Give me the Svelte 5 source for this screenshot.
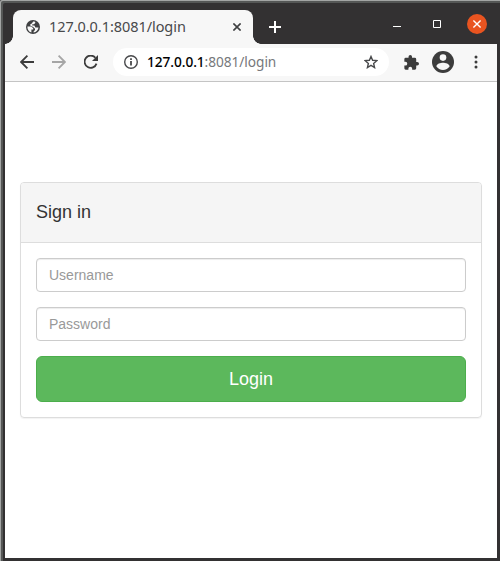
<script>
  let username = $state('');
  let password = $state('');
</script>

<div class="window">
  <header class="titlebar">
    <div class="tab">
      <svg class="globe" width="14" height="14" viewBox="0 0 14 14">
        <circle cx="7" cy="7" r="7" fill="#3f4042" />
        <path d="M1.4 6.4 5.2 6.5 7.2 8.3V9.6H5.4V12.4C2.7 11.7 1.2 9.4 1.4 6.4ZM7.2 1.5C8 1.5 8.6 1.6 9.2 1.9V3.1L8 4.2H6.3V5.4H8.4L9.4 7.6H12.5C12.2 10.2 10.3 12.3 7.6 12.5V11.4L9 10V8.8L7.2 7 4.2 5.6V4.4L5.8 3.4Z" fill="#f7f7f7" />
      </svg>
      <span class="title">127.0.0.1:8081/login</span>
      <svg class="close" width="8" height="8" viewBox="0 0 8 8"><path d="m.4.4 7.2 7.2m0-7.2L.4 7.6" stroke="#3f4042" stroke-width="1.6" /></svg>
    </div>
    <svg class="plus" width="12" height="12" viewBox="0 0 12 12"><path d="M6 0v12M0 6h12" stroke="#fff" stroke-width="2" /></svg>
    <div class="controls">
      <svg width="8" height="8" viewBox="0 0 8 8"><path d="M0 6.5h8" stroke="#fff" /></svg>
      <svg width="8" height="8" viewBox="0 0 8 8"><path d="M.5.5h7v7h-7z" fill="none" stroke="#fff" /></svg>
      <svg width="20" height="20" viewBox="0 0 20 20"><circle cx="10" cy="10" r="10" fill="#e95420" /><path d="m6.4 6.4 7.2 7.2m0-7.2-7.2 7.2" stroke="#fff" stroke-width="1.4" /></svg>
    </div>
  </header>

  <nav class="toolbar">
    <svg class="back" width="14" height="14" viewBox="0 0 14 14"><path d="M14 7H1.5M7.4.7 1.1 7l6.3 6.3" fill="none" stroke="#3c3c3c" stroke-width="1.8" /></svg>
    <svg class="forward" width="14" height="14" viewBox="0 0 14 14"><path d="M0 7h12.5M6.6.7 12.9 7l-6.3 6.3" fill="none" stroke="#a6a6a6" stroke-width="1.8" /></svg>
    <svg class="reload" width="14" height="14" viewBox="0 0 14 14"><path d="M12.5 8.6A6.1 6.1 0 1 1 11.4 2.8" fill="none" stroke="#3c3c3c" stroke-width="1.8" /><path d="M14 0v6H8z" fill="#3c3c3c" /></svg>
    <div class="address">
      <svg width="14" height="14" viewBox="0 0 14 14"><circle cx="7" cy="7" r="6.3" fill="none" stroke="#48494b" stroke-width="1.4" /><path d="M7 3.2v1.7M7 6v4.6" stroke="#48494b" stroke-width="1.8" /></svg>
      <span class="url"><b>127.0.0.1</b>:8081/login</span>
      <svg class="star" width="14" height="14" viewBox="0 0 14 14"><path d="m7 1.5 1.6 3.8 4.2.36-3.18 2.76.95 4.1L7 10.35l-3.57 2.17.95-4.1L1.2 5.66l4.2-.36z" fill="none" stroke="#48494b" stroke-width="1.4" /></svg>
    </div>
    <svg class="puzzle" width="15" height="15" viewBox="1.5 1 21.5 21.5"><path d="M20.5 11H19V7a2 2 0 0 0-2-2h-4V3.5a2.5 2.5 0 0 0-5 0V5H4a2 2 0 0 0-2 2v3.8h1.5a2.7 2.7 0 0 1 0 5.4H2V20a2 2 0 0 0 2 2h3.8v-1.5a2.7 2.7 0 0 1 5.4 0V22H17a2 2 0 0 0 2-2v-4h1.5a2.5 2.5 0 0 0 0-5z" fill="#3c3c3c" /></svg>
    <svg class="avatar" width="22" height="22" viewBox="0 0 22 22"><circle cx="11" cy="11" r="11" fill="#3c3c3c" /><circle cx="11" cy="6.6" r="3.3" fill="#f7f7f7" /><path d="M4.3 15.3C4.8 12.9 8.6 11.8 11 11.8s6.2 1.1 6.7 3.5a8 8 0 0 1-13.4 0z" fill="#f7f7f7" /></svg>
    <svg class="dots" width="4" height="14" viewBox="0 0 4 14"><g fill="#3c3c3c"><circle cx="2" cy="2" r="1.5" /><circle cx="2" cy="7" r="1.5" /><circle cx="2" cy="12" r="1.5" /></g></svg>
  </nav>

  <main>
    <form class="panel" onsubmit={(e) => e.preventDefault()}>
      <h2>Sign in</h2>
      <div class="body">
        <input type="text" placeholder="Username" bind:value={username} />
        <input type="password" placeholder="Password" bind:value={password} />
        <button type="submit">Login</button>
      </div>
    </form>
  </main>
</div>

<style>
  :global(body) { margin: 0; background: #333132; overflow: hidden; }
  * { box-sizing: border-box; }
  svg { display: block; flex: none; }
  .window {
    width: 500px;
    height: 561px;
    display: flex;
    flex-direction: column;
    padding: 3px 3px 3px 5px;
    background: #333132;
    box-shadow: inset 1px 1px #a3a5a4, inset 3px 3px #555756;
    border-radius: 2px 0 0 0;
  }
  .titlebar { height: 41px; flex: none; display: flex; align-items: flex-end; }
  .tab {
    position: relative;
    width: 240px;
    height: 34px;
    margin-left: 8px;
    padding: 0 12px 0 13px;
    display: flex;
    align-items: center;
    background: #f7f7f7;
    border-radius: 8px 8px 0 0;
  }
  .tab::before, .tab::after {
    content: '';
    position: absolute;
    bottom: 0;
    width: 8px;
    height: 8px;
  }
  .tab::before { left: -8px; background: radial-gradient(circle at 0 0, transparent 7.5px, #f7f7f7 8px); }
  .tab::after { right: -8px; background: radial-gradient(circle at 100% 0, transparent 7.5px, #f7f7f7 8px); }
  .title, .url { font-family: "Noto Sans", sans-serif; white-space: nowrap; }
  .title { margin: 0 0 2px 9px; font-size: 14.5px; line-height: 20px; letter-spacing: -0.06px; color: #48494b; }
  .close { margin-left: auto; }
  .plus { margin: 0 0 11px 16px; }
  .controls { display: flex; align-items: center; gap: 32px; margin: 0 10px 10px auto; }
  .controls svg:last-child { margin-left: -6px; }
  .toolbar {
    height: 38px;
    flex: none;
    display: flex;
    align-items: center;
    padding: 0 0 1px 15px;
    background: #f7f7f7;
    border-bottom: 1px solid #c4c4c4;
  }
  .forward { margin-left: 18px; }
  .reload { margin-left: 18px; }
  .address {
    width: 276px;
    height: 28px;
    margin-left: 15px;
    padding: 0 11px;
    display: flex;
    align-items: center;
    border-radius: 14px;
    background: #fff;
  }
  .url { margin-left: 9px; font-size: 13.7px; line-height: 20px; letter-spacing: -0.06px; color: #76787b; }
  .url b { font-weight: 500; color: #000; }
  .star { margin-left: auto; }
  .puzzle { margin-left: 14.5px; }
  .avatar { margin-left: 13.5px; }
  .dots { margin-left: 19.5px; }
  main { flex: 1; padding: 100px 15px 0; background: #fff; }
  .panel {
    height: 236px;
    font-family: "Liberation Sans", Arial, sans-serif;
    border: 1px solid #ddd;
    border-radius: 4px;
    box-shadow: 0 1px 1px rgba(0, 0, 0, .05);
  }
  h2 {
    height: 60px;
    margin: 0;
    padding: 0 15px;
    border-bottom: 1px solid #ddd;
    border-radius: 3px 3px 0 0;
    background: #f5f5f5;
    color: #333;
    font-size: 18px;
    font-weight: 400;
    line-height: 59px;
  }
  .body { display: flex; flex-direction: column; gap: 15px; padding: 15px; }
  input {
    width: 100%;
    height: 34px;
    padding: 6px 12px;
    border: 1px solid #ccc;
    border-radius: 4px;
    box-shadow: inset 0 1px 1px rgba(0, 0, 0, .075);
    background: #fff;
    color: #555;
    font: 14px/20px "Liberation Sans", Arial, sans-serif;
    outline: none;
  }
  input::placeholder { color: #999; opacity: 1; }
  button {
    height: 46px;
    padding: 10px 16px;
    border: 1px solid #4cae4c;
    border-radius: 6px;
    background: #5cb85c;
    color: #fff;
    font: 18px/24px "Liberation Sans", Arial, sans-serif;
  }
</style>
